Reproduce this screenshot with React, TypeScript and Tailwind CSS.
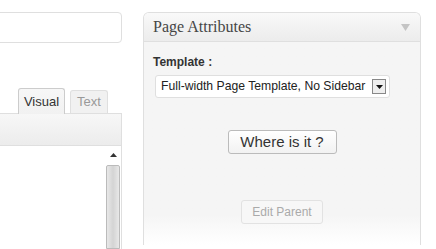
import React from "react";

const sans = { fontFamily: '"Liberation Sans", Arial, sans-serif' };

function TitleField() {
  return <div className="mt-3 -ml-2 h-[31px] rounded-[4px] border border-[#dfdfdf] bg-white" />;
}

function EditorTabs() {
  return (
    <div className="mt-[45px] flex items-end gap-[5px] pl-[18px]" style={sans}>
      <div className="relative z-10 -mb-px flex h-[26px] w-[47px] items-center justify-center rounded-t-[3px] border border-b-0 border-[#cccccc] bg-gradient-to-b from-[#f7f7f7] to-[#f1f1f1] text-[13px] text-[#333]">
        Visual
      </div>
      <div className="flex h-[23px] w-[38px] items-center justify-center rounded-t-[3px] border border-b-0 border-[#dfdfdf] bg-[#f1f1f1] text-[13px] text-[#999]">
        Text
      </div>
    </div>
  );
}

function Editor() {
  return (
    <div className="flex flex-col">
      {/* toolbar */}
      <div className="h-[33px] border-t border-r border-b border-[#dfdfdf] bg-gradient-to-b from-[#f7f7f7] to-[#ececec]" />
      <div className="flex h-[103px] justify-end border-r border-[#dfdfdf] bg-white">
        <div className="flex w-[16px] flex-col items-center pt-[2px]">
          <div className="flex h-[16px] w-[16px] items-center justify-center">
            <svg width="7" height="4" viewBox="0 0 7 4">
              <path d="M0 4 L3.5 0 L7 4 Z" fill="#333" />
            </svg>
          </div>
          <div className="mt-[2px] h-[90px] w-[14px] rounded-t-[2px] border border-[#bbb] bg-gradient-to-r from-[#e8e8e8] via-[#d4d4d4] to-[#e8e8e8]" />
        </div>
      </div>
    </div>
  );
}

function PageAttributes() {
  return (
    <div className="mt-3 flex h-[233px] w-[278px] flex-col overflow-hidden rounded-t-[6px] border border-b-0 border-[#dfdfdf]">
      <div className="flex h-[29px] items-center justify-between border-b border-[#dfdfdf] bg-gradient-to-b from-[#f9f9f9] to-[#ececec] pl-[9px] pr-[10px]">
        <span className="text-[16px] text-[#464646]" style={{ fontFamily: '"Liberation Serif", Georgia, serif' }}>
          Page Attributes
        </span>
        <svg width="9" height="7" viewBox="0 0 9 7">
          <path d="M0 0 L9 0 L4.5 7 Z" fill="#c4c4c4" />
        </svg>
      </div>
      <div className="flex flex-1 flex-col bg-gradient-to-b from-[#f5f5f5] from-85% to-white px-[9px] pt-[13px]" style={sans}>
        <div className="text-[12px] font-bold leading-[14px] text-[#333]">Template :</div>
        <div className="mt-[6px] ml-[2px] flex h-[23px] w-[235px] items-center justify-between rounded-[3px] border border-[#dfdfdf] bg-white pl-[5px] pr-[3px]">
          <span className="whitespace-nowrap text-[12.2px] text-[#222]">Full-width Page Template, No Sidebar</span>
          <div className="flex h-[15px] w-[14px] shrink-0 items-center justify-center border border-[#888] bg-[#eeeeee]">
            <svg width="7" height="4" viewBox="0 0 7 4">
              <path d="M0 0 L7 0 L3.5 4 Z" fill="#111" />
            </svg>
          </div>
        </div>
        <div className="mt-[32px] flex justify-center">
          <button className="flex h-[24px] w-[109px] items-center justify-center rounded-[3px] border border-[#bbbbbb] bg-gradient-to-b from-white to-[#f2f2f2] text-[15px] text-[#333]">
            Where is it ?
          </button>
        </div>
        <div className="mt-[46px] flex justify-center">
          <button className="flex h-[24px] w-[82px] items-center justify-center rounded-[3px] border border-[#e2e2e2] bg-[#f7f7f7] text-[12px] text-[#aaa]">
            Edit Parent
          </button>
        </div>
      </div>
    </div>
  );
}

export default function App() {
  return (
    <div className="flex h-[249px] w-[436px] overflow-hidden bg-white">
      <div className="flex w-[122px] flex-col">
        <TitleField />
        <EditorTabs />
        <Editor />
      </div>
      <div className="ml-[21px]">
        <PageAttributes />
      </div>
    </div>
  );
}
